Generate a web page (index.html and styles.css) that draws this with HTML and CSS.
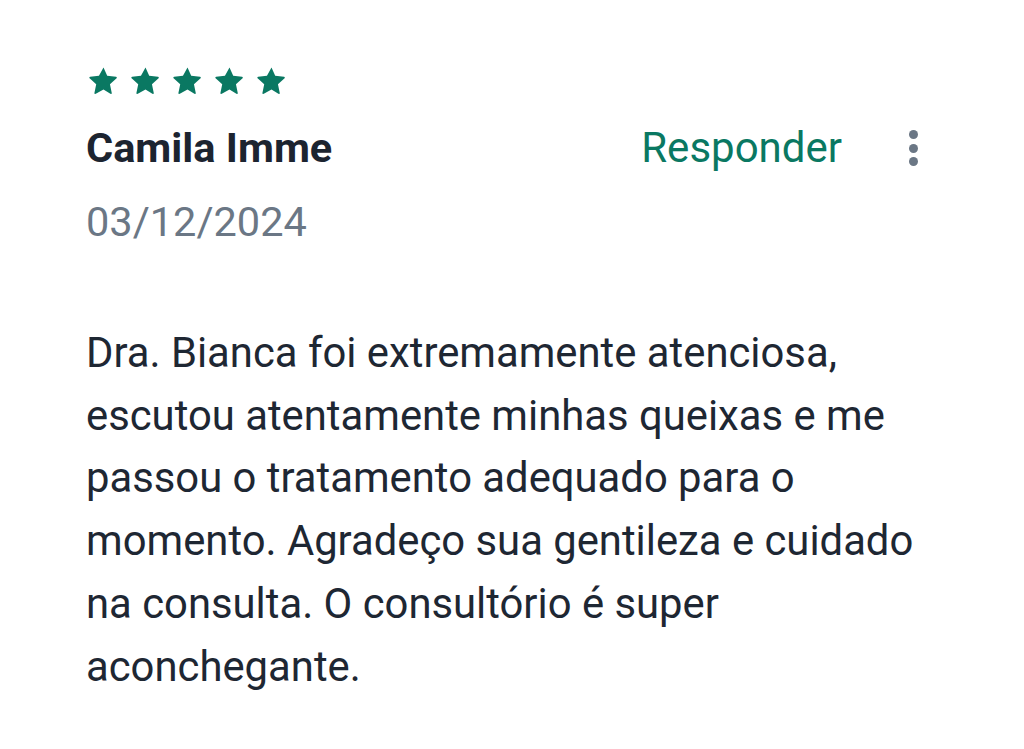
FILE: index.html
```html
<!DOCTYPE html>
<html lang="pt-BR">
<head>
<meta charset="utf-8">
<title>Avaliação</title>
<link rel="stylesheet" href="styles.css">
</head>
<body>
<article class="review">
  <div class="stars" aria-label="5 estrelas">
    <svg class="star" viewBox="0 0 24 24"><path d="M12 2.6l2.7 5.9 6.4.7c.6.1.8.8.4 1.2l-4.8 4.3 1.3 6.3c.1.6-.5 1-1 .7L12 18.5l-5.6 3.2c-.5.3-1.1-.1-1-.7l1.3-6.3-4.8-4.3c-.4-.4-.2-1.1.4-1.2l6.4-.7z"/></svg>
    <svg class="star" viewBox="0 0 24 24"><path d="M12 2.6l2.7 5.9 6.4.7c.6.1.8.8.4 1.2l-4.8 4.3 1.3 6.3c.1.6-.5 1-1 .7L12 18.5l-5.6 3.2c-.5.3-1.1-.1-1-.7l1.3-6.3-4.8-4.3c-.4-.4-.2-1.1.4-1.2l6.4-.7z"/></svg>
    <svg class="star" viewBox="0 0 24 24"><path d="M12 2.6l2.7 5.9 6.4.7c.6.1.8.8.4 1.2l-4.8 4.3 1.3 6.3c.1.6-.5 1-1 .7L12 18.5l-5.6 3.2c-.5.3-1.1-.1-1-.7l1.3-6.3-4.8-4.3c-.4-.4-.2-1.1.4-1.2l6.4-.7z"/></svg>
    <svg class="star" viewBox="0 0 24 24"><path d="M12 2.6l2.7 5.9 6.4.7c.6.1.8.8.4 1.2l-4.8 4.3 1.3 6.3c.1.6-.5 1-1 .7L12 18.5l-5.6 3.2c-.5.3-1.1-.1-1-.7l1.3-6.3-4.8-4.3c-.4-.4-.2-1.1.4-1.2l6.4-.7z"/></svg>
    <svg class="star" viewBox="0 0 24 24"><path d="M12 2.6l2.7 5.9 6.4.7c.6.1.8.8.4 1.2l-4.8 4.3 1.3 6.3c.1.6-.5 1-1 .7L12 18.5l-5.6 3.2c-.5.3-1.1-.1-1-.7l1.3-6.3-4.8-4.3c-.4-.4-.2-1.1.4-1.2l6.4-.7z"/></svg>
  </div>
  <div class="head">
    <h2 class="name">Camila Imme</h2>
    <div class="actions">
      <span class="reply">Responder</span>
      <span class="kebab" aria-label="Mais opções"><i></i><i></i><i></i></span>
    </div>
  </div>
  <div class="date">03/12/2024</div>
  <p class="text">Dra. Bianca foi extremamente atenciosa, escutou atentamente minhas queixas e me passou o tratamento adequado para o momento. Agradeço sua gentileza e cuidado na consulta. O consultório é super aconchegante.</p>
</article>
</body>
</html>
```
FILE: styles.css
```css
html, body {
  margin: 0;
  background: #ffffff;
}
body {
  font-family: Roboto, "Noto Sans", sans-serif;
  color: #1e2733;
}
.review {
  width: 840px;
  padding: 64px 0 0 86px;
}
.stars {
  display: flex;
  gap: 9px;
  margin-left: 1px;
}
.star {
  width: 33px;
  height: 33px;
  fill: #0a7862;
}
.head {
  display: flex;
  justify-content: space-between;
  align-items: center;
  margin-top: 23px;
}
.name {
  margin: 0;
  font-size: 41.5px;
  font-weight: 700;
  line-height: 56px;
  color: #1c2430;
}
.actions {
  display: flex;
  align-items: center;
  gap: 67px;
}
.reply {
  font-size: 42px;
  line-height: 56px;
  color: #0a7862;
}
.kebab {
  display: flex;
  flex-direction: column;
  gap: 4.5px;
  padding-right: 8px;
}
.kebab i {
  display: block;
  width: 9px;
  height: 9px;
  border-radius: 50%;
  background: #6b7785;
}
.date {
  font-size: 41.5px;
  line-height: 56px;
  margin-top: 18px;
  color: #6b7785;
}
.text {
  margin: 72px 0 0;
  font-size: 41.8px;
  line-height: 62.7px;
  color: #1e2733;
}
```
